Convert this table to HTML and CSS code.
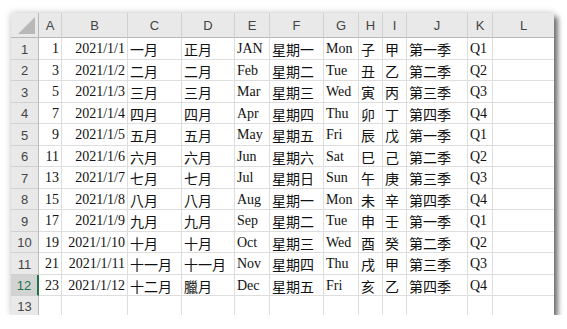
FILE: index.html
```html
<!DOCTYPE html>
<html lang="zh-Hant">
<head>
<meta charset="utf-8">
<title>Sheet</title>
<link rel="stylesheet" href="styles.css">
</head>
<body>
<div class="sheet">
  <div class="ch corner"><span class="tri"></span></div>
  <div class="ch">A</div><div class="ch">B</div><div class="ch">C</div><div class="ch">D</div><div class="ch">E</div><div class="ch">F</div><div class="ch">G</div><div class="ch">H</div><div class="ch">I</div><div class="ch">J</div><div class="ch">K</div><div class="ch last">L</div>

  <div class="rh">1</div><div class="c r">1</div><div class="c r">2021/1/1</div><div class="c">一月</div><div class="c">正月</div><div class="c">JAN</div><div class="c">星期一</div><div class="c">Mon</div><div class="c">子</div><div class="c">甲</div><div class="c">第一季</div><div class="c">Q1</div><div class="c"></div>
  <div class="rh">2</div><div class="c r">3</div><div class="c r">2021/1/2</div><div class="c">二月</div><div class="c">二月</div><div class="c">Feb</div><div class="c">星期二</div><div class="c">Tue</div><div class="c">丑</div><div class="c">乙</div><div class="c">第二季</div><div class="c">Q2</div><div class="c"></div>
  <div class="rh">3</div><div class="c r">5</div><div class="c r">2021/1/3</div><div class="c">三月</div><div class="c">三月</div><div class="c">Mar</div><div class="c">星期三</div><div class="c">Wed</div><div class="c">寅</div><div class="c">丙</div><div class="c">第三季</div><div class="c">Q3</div><div class="c"></div>
  <div class="rh">4</div><div class="c r">7</div><div class="c r">2021/1/4</div><div class="c">四月</div><div class="c">四月</div><div class="c">Apr</div><div class="c">星期四</div><div class="c">Thu</div><div class="c">卯</div><div class="c">丁</div><div class="c">第四季</div><div class="c">Q4</div><div class="c"></div>
  <div class="rh">5</div><div class="c r">9</div><div class="c r">2021/1/5</div><div class="c">五月</div><div class="c">五月</div><div class="c">May</div><div class="c">星期五</div><div class="c">Fri</div><div class="c">辰</div><div class="c">戊</div><div class="c">第一季</div><div class="c">Q1</div><div class="c"></div>
  <div class="rh">6</div><div class="c r">11</div><div class="c r">2021/1/6</div><div class="c">六月</div><div class="c">六月</div><div class="c">Jun</div><div class="c">星期六</div><div class="c">Sat</div><div class="c">巳</div><div class="c">己</div><div class="c">第二季</div><div class="c">Q2</div><div class="c"></div>
  <div class="rh">7</div><div class="c r">13</div><div class="c r">2021/1/7</div><div class="c">七月</div><div class="c">七月</div><div class="c">Jul</div><div class="c">星期日</div><div class="c">Sun</div><div class="c">午</div><div class="c">庚</div><div class="c">第三季</div><div class="c">Q3</div><div class="c"></div>
  <div class="rh">8</div><div class="c r">15</div><div class="c r">2021/1/8</div><div class="c">八月</div><div class="c">八月</div><div class="c">Aug</div><div class="c">星期一</div><div class="c">Mon</div><div class="c">未</div><div class="c">辛</div><div class="c">第四季</div><div class="c">Q4</div><div class="c"></div>
  <div class="rh">9</div><div class="c r">17</div><div class="c r">2021/1/9</div><div class="c">九月</div><div class="c">九月</div><div class="c">Sep</div><div class="c">星期二</div><div class="c">Tue</div><div class="c">申</div><div class="c">壬</div><div class="c">第一季</div><div class="c">Q1</div><div class="c"></div>
  <div class="rh">10</div><div class="c r">19</div><div class="c r">2021/1/10</div><div class="c">十月</div><div class="c">十月</div><div class="c">Oct</div><div class="c">星期三</div><div class="c">Wed</div><div class="c">酉</div><div class="c">癸</div><div class="c">第二季</div><div class="c">Q2</div><div class="c"></div>
  <div class="rh">11</div><div class="c r">21</div><div class="c r">2021/1/11</div><div class="c">十一月</div><div class="c">十一月</div><div class="c">Nov</div><div class="c">星期四</div><div class="c">Thu</div><div class="c">戌</div><div class="c">甲</div><div class="c">第三季</div><div class="c">Q3</div><div class="c"></div>
  <div class="rh sel">12</div><div class="c r">23</div><div class="c r">2021/1/12</div><div class="c">十二月</div><div class="c">臘月</div><div class="c">Dec</div><div class="c">星期五</div><div class="c">Fri</div><div class="c">亥</div><div class="c">乙</div><div class="c">第四季</div><div class="c">Q4</div><div class="c"></div>
  <div class="rh bottom">13</div><div class="c bottom"></div><div class="c bottom"></div><div class="c bottom"></div><div class="c bottom"></div><div class="c bottom"></div><div class="c bottom"></div><div class="c bottom"></div><div class="c bottom"></div><div class="c bottom"></div><div class="c bottom"></div><div class="c bottom"></div><div class="c bottom"></div>
</div>
</body>
</html>
```
FILE: styles.css
```css
html, body {
  margin: 0;
  padding: 0;
  background: #ffffff;
}
body {
  padding: 13px 0 0 11px;
  overflow: hidden;
}
.sheet {
  display: grid;
  grid-template-columns: 28px 23px 66px 54px 53px 35px 54px 35px 24px 24px 61px 25px 61px;
  grid-template-rows: 25px repeat(6, 22px 21px) 19px;
  width: 543px;
  background: #ffffff;
  box-shadow: 0 0 7px rgba(0, 0, 0, 0.22), 4px 4px 5px rgba(0, 0, 0, 0.5);
  font-family: "Liberation Serif", "Noto Sans CJK TC", serif;
  font-size: 14px;
  color: #111111;
}
.ch {
  box-sizing: border-box;
  background: #e9e9e9;
  border-right: 1px solid #d0d0d0;
  border-bottom: 1px solid #b8b8b8;
  display: flex;
  align-items: center;
  justify-content: center;
  font-family: "Liberation Sans", "Noto Sans", sans-serif;
  font-size: 13px;
  color: #444444;
  padding-top: 1px;
}
.ch.last {
  border-right: none;
}
.corner {
  position: relative;
  border-right: 1px solid #b8b8b8;
}
.tri {
  position: absolute;
  right: 3px;
  bottom: 3px;
  width: 0;
  height: 0;
  border-left: 17px solid transparent;
  border-bottom: 17px solid #b8b8b8;
}
.rh {
  box-sizing: border-box;
  background: #e9e9e9;
  border-right: 1px solid #b8b8b8;
  border-bottom: 1px solid #d0d0d0;
  display: flex;
  align-items: center;
  justify-content: center;
  font-family: "Liberation Sans", "Noto Sans", sans-serif;
  font-size: 13px;
  color: #444444;
  padding-top: 1px;
}
.rh.sel {
  background: #d3d3d3;
  color: #217346;
  border-right: 2px solid #217346;
}
.rh.bottom, .c.bottom {
  border-bottom: none;
}
.c {
  box-sizing: border-box;
  border-right: 1px solid #dedede;
  border-bottom: 1px solid #dedede;
  display: flex;
  align-items: center;
  padding: 1px 2px 0 2px;
  white-space: nowrap;
  overflow: visible;
}
.c.r {
  justify-content: flex-end;
}
.c:nth-child(13n) {
  border-right: none;
}
```
